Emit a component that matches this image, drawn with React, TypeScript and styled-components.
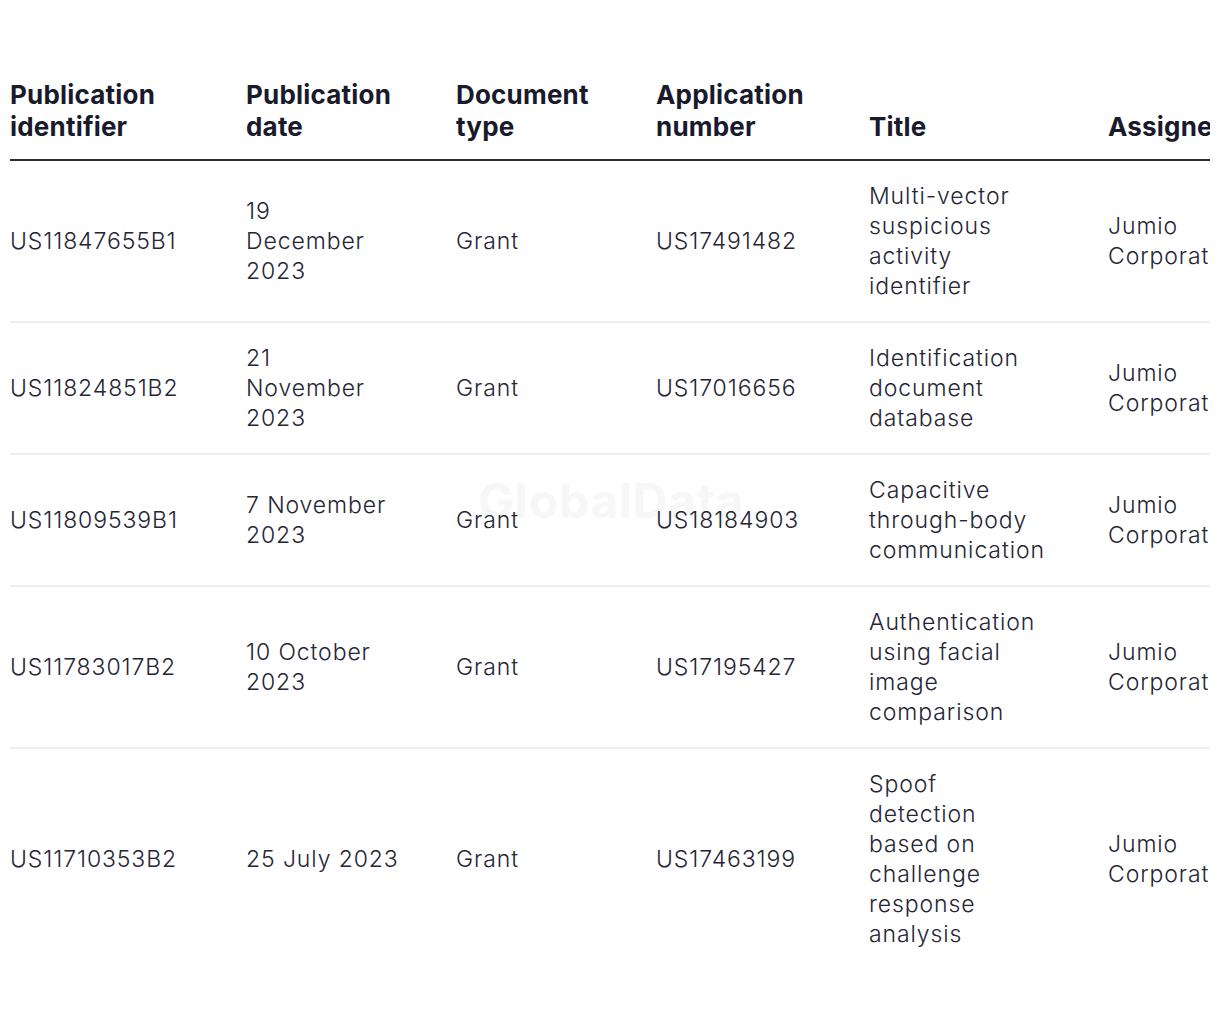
import styled, { createGlobalStyle } from "styled-components"

const GlobalStyle = createGlobalStyle`
    html, body {
        margin: 0;
        padding: 0;
        background: #ffffff;
    }
    body {
        font-family: Inter, "Noto Sans", "Liberation Sans", sans-serif;
    }
`

interface Patent {
    id: string
    date: string
    type: string
    application: string
    title: string
    assignee: string
}

// short dates keep to one line, like in the source table
const patents: Patent[] = [
    {
        id: "US11847655B1",
        date: "19 December 2023",
        type: "Grant",
        application: "US17491482",
        title: "Multi-vector suspicious activity identifier",
        assignee: "Jumio Corporation"
    },
    {
        id: "US11824851B2",
        date: "21 November 2023",
        type: "Grant",
        application: "US17016656",
        title: "Identification document database",
        assignee: "Jumio Corporation"
    },
    {
        id: "US11809539B1",
        date: "7 November 2023",
        type: "Grant",
        application: "US18184903",
        title: "Capacitive through-body communication",
        assignee: "Jumio Corporation"
    },
    {
        id: "US11783017B2",
        date: "10 October 2023",
        type: "Grant",
        application: "US17195427",
        title: "Authentication using facial image comparison",
        assignee: "Jumio Corporation"
    },
    {
        id: "US11710353B2",
        date: "25\u00a0July\u00a02023",
        type: "Grant",
        application: "US17463199",
        title: "Spoof detection based on challenge response analysis",
        assignee: "Jumio Corporation"
    }
]

const columns = [
    { label: "Publication identifier", width: 236, pad: 60 },
    { label: "Publication date", width: 210, pad: 64 },
    { label: "Document type", width: 200, pad: 60 },
    { label: "Application number", width: 213, pad: 60 },
    { label: "Title", width: 239, pad: 61 },
    { label: "Assignee", width: 260, pad: 60 }
]

export default function App() {
    return (
        <Page>
            <GlobalStyle />
            <Frame>
                <Watermark>GlobalData</Watermark>
                <Table>
                    <colgroup>
                        {columns.map(col => (
                            <col key={col.label} style={{ width: col.width }} />
                        ))}
                    </colgroup>
                    <thead>
                        <tr>
                            {columns.map(col => (
                                <HeadCell key={col.label}>{col.label}</HeadCell>
                            ))}
                        </tr>
                    </thead>
                    <tbody>
                        {patents.map(p => (
                            <Row key={p.id}>
                                {[p.id, p.date, p.type, p.application, p.title, p.assignee].map(
                                    (value, i) => (
                                        <Cell key={i} $pad={columns[i].pad}>
                                            {value}
                                        </Cell>
                                    )
                                )}
                            </Row>
                        ))}
                    </tbody>
                </Table>
            </Frame>
        </Page>
    )
}

const Page = styled.div`
    padding: 63px 10px 0;
`

const Frame = styled.div`
    position: relative;
    width: 1200px;
    overflow: hidden;
`

const Watermark = styled.div`
    position: absolute;
    top: 410px;
    left: 468px;
    font-size: 48px;
    line-height: 56px;
    font-weight: 700;
    letter-spacing: 0.8px;
    color: #f7f7f8;
    pointer-events: none;
    user-select: none;
`

const Table = styled.table`
    position: relative;
    table-layout: fixed;
    width: 1358px;
    border-collapse: collapse;
    border-spacing: 0;
`

const HeadCell = styled.th`
    text-align: left;
    vertical-align: bottom;
    padding: 16px 40px 16px 0;
    font-size: 26px;
    line-height: 32px;
    font-weight: 700;
    letter-spacing: 0.2px;
    color: #191a2c;
    border-bottom: 2px solid #2c2c2e;
`

const Row = styled.tr`
    border-bottom: 2px solid #eeeeee;

    &:last-child {
        border-bottom: none;
    }
`

const Cell = styled.td<{ $pad: number }>`
    vertical-align: middle;
    padding: 20px ${({ $pad }) => $pad}px 20px 0;
    font-size: 23px;
    line-height: 30px;
    font-weight: 300;
    letter-spacing: 0.9px;
    color: #252535;
`
